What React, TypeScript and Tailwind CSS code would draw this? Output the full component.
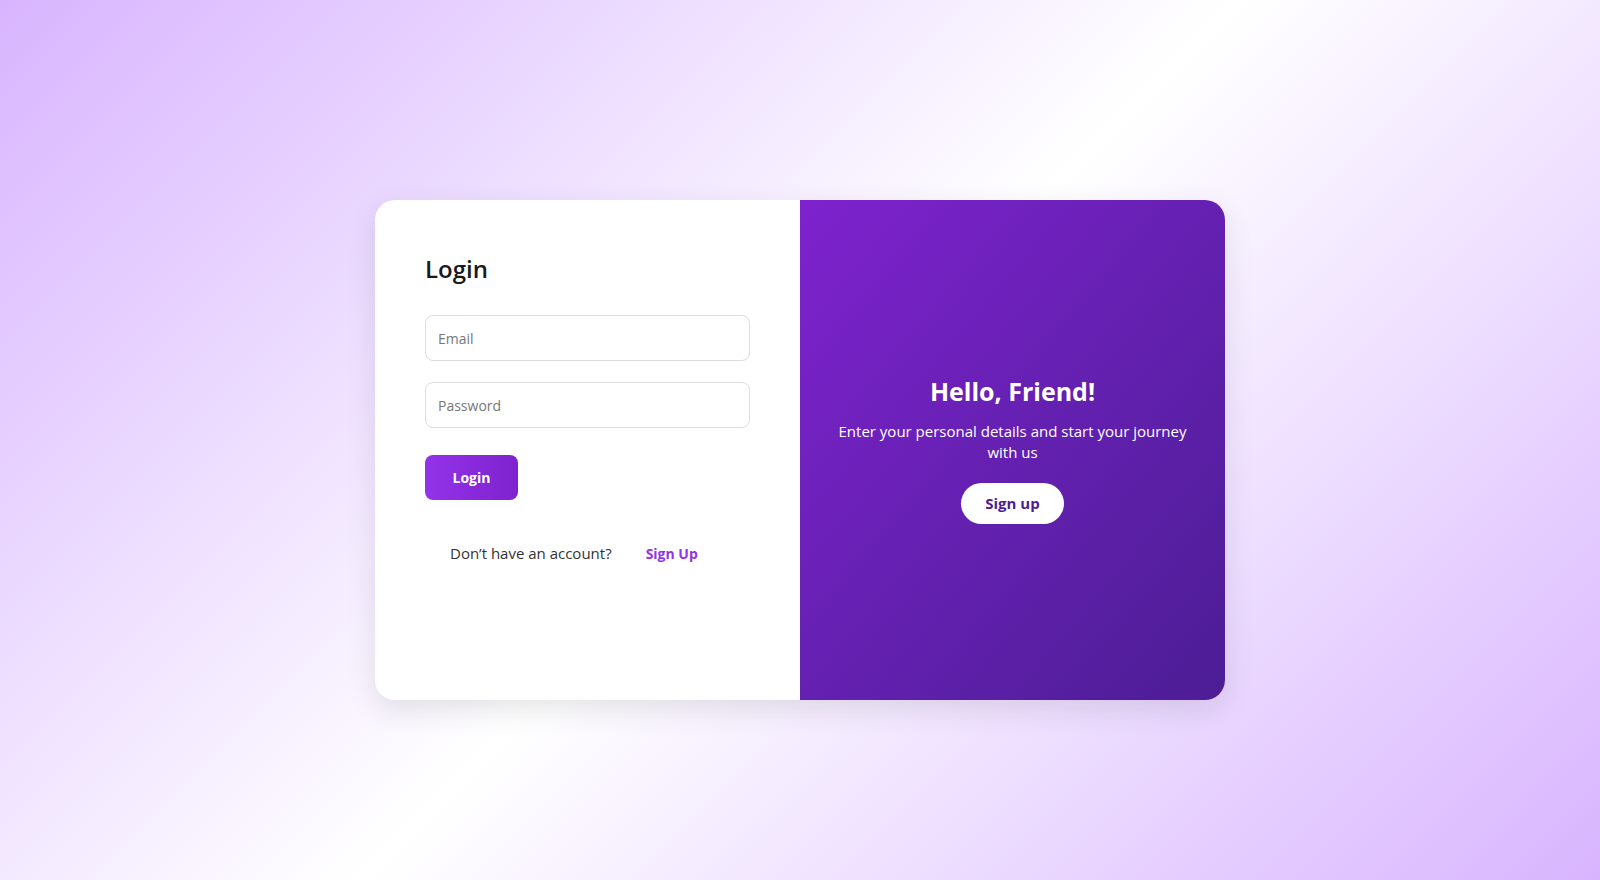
import { useState } from 'react';

export default function App() {
  const [email, setEmail] = useState('');
  const [password, setPassword] = useState('');

  return (
    <main className="flex min-h-screen items-center justify-center bg-linear-135 from-[#d8b4fe] via-white to-[#d8b4fe] pt-5 font-['Open_Sans',sans-serif]">
      <div className="flex h-[500px] w-[850px] overflow-hidden rounded-[20px] bg-white shadow-[0_10px_30px_rgba(0,0,0,0.1)]">
        {/* left: form */}
        <section className="flex w-1/2 flex-col px-[50px] pt-[51px]">
          <h1 className="text-[24px] font-semibold text-[#1a1a1a]">Login</h1>

          <input
            type="email"
            value={email}
            onChange={(e) => setEmail(e.target.value)}
            placeholder="Email"
            className="mt-[28px] h-[46px] w-full rounded-lg border border-[#dddddd] px-3 text-[14px] text-[#333] outline-none placeholder:text-[#777]"
          />
          <input
            type="password"
            value={password}
            onChange={(e) => setPassword(e.target.value)}
            placeholder="Password"
            className="mt-[21px] h-[46px] w-full rounded-lg border border-[#dddddd] px-3 text-[14px] text-[#333] outline-none placeholder:text-[#777]"
          />

          <button className="mt-[27px] h-[45px] w-[93px] rounded-lg bg-gradient-to-r from-[#9333ea] to-[#7e22ce] text-[14px] font-bold text-white">
            Login
          </button>

          <p className="mt-[42px] flex items-center gap-[34px] pl-[25px] text-[15px] text-[#333]">
            <span>Don’t have an account?</span>
            <a href="#" className="text-[14px] font-bold text-[#9333ea]">
              Sign Up
            </a>
          </p>
        </section>

        {/* right: welcome */}
        <section className="flex w-1/2 flex-col items-center justify-center bg-gradient-to-br from-[#7e22ce] to-[#4c1d95] px-[34px] text-center text-white">
          <h2 className="text-[25px] font-bold leading-tight">Hello, Friend!</h2>
          <p className="mt-[14px] text-[15px] leading-[21px]">
            Enter your personal details and start your journey with us
          </p>
          <button className="mt-[20px] h-[41px] w-[103px] rounded-full bg-white text-[15px] font-bold text-[#4c1d95]">
            Sign up
          </button>
        </section>
      </div>
    </main>
  );
}
